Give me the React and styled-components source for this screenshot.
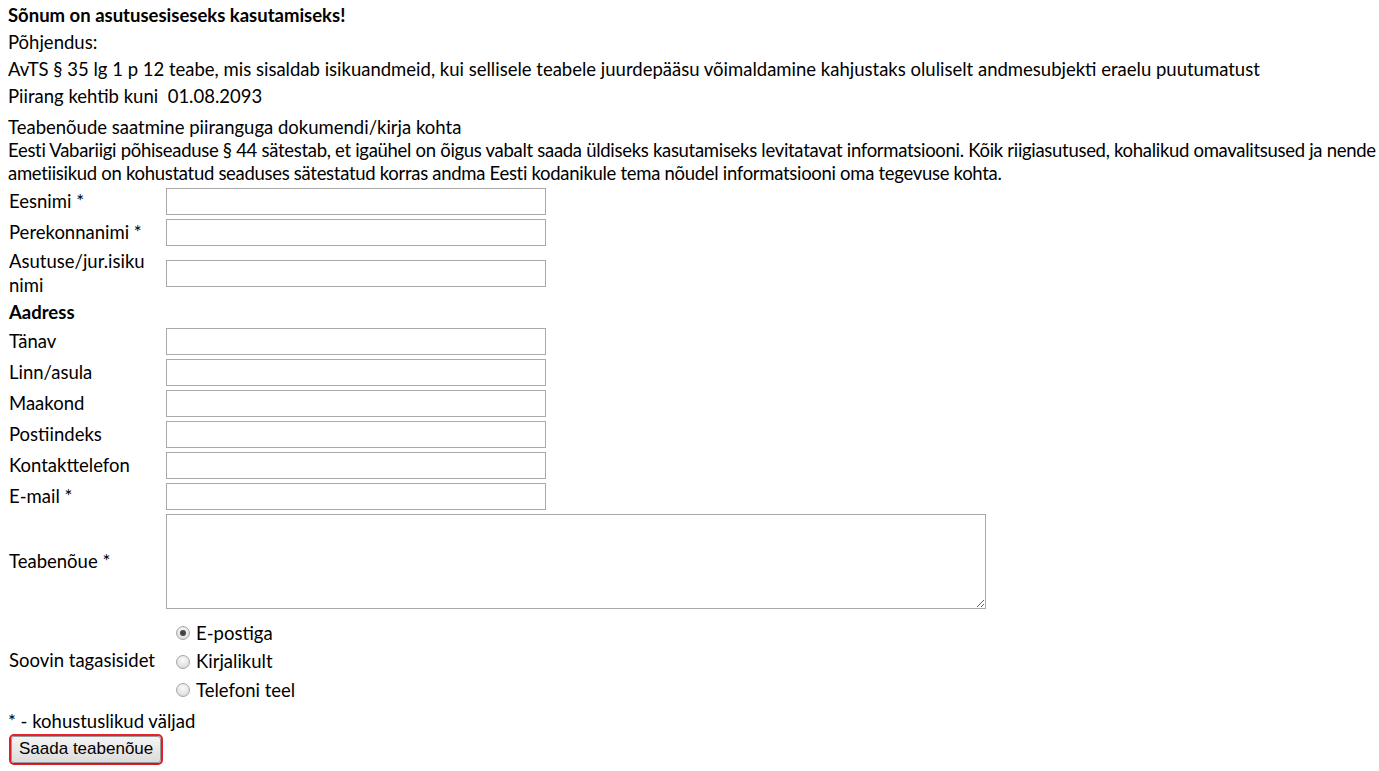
import React from "react";
import styled, { createGlobalStyle } from "styled-components";

const Global = createGlobalStyle`
  body {
    margin: 0;
    background: #fff;
    color: #000;
    font-family: Lato, "Noto Sans", sans-serif;
    font-size: 18.5px;
  }
`;

const Page = styled.div`
  padding: 2px 2px 0 8px;
`;

const Notice = styled.div`
  line-height: 27px;
`;

const NoticeLine = styled.div`
  font-weight: ${(p) => (p.bold ? 700 : 400)};
`;

const Intro = styled.div`
  margin-top: 6px;
  line-height: 23px;
`;

const IntroText = styled.div`
  letter-spacing: -0.3px;
  white-space: nowrap;
`;

const FormTable = styled.table`
  border-collapse: separate;
  border-spacing: 2px;
  margin-left: -2px;
  font-size: inherit;
  td {
    padding: 1px;
    vertical-align: middle;
    line-height: 23px;
  }
`;

const LabelCell = styled.td`
  width: 153px;
  font-weight: ${(p) => (p.bold ? 700 : 400)};
  line-height: ${(p) => (p.tall ? "23.5px" : "23px")} !important;
`;

const TextInput = styled.input`
  box-sizing: border-box;
  width: 380px;
  height: 27px;
  margin: 0;
  border: 1px solid #a9a9a9;
  display: block;
  font: inherit;
`;

const TextArea = styled.textarea`
  box-sizing: border-box;
  width: 820px;
  height: 95px;
  margin: 0;
  border: 1px solid #a9a9a9;
  display: block;
  font: inherit;
`;

const RadioGroup = styled.div`
  padding: 6px 0 3px;
`;

const RadioLine = styled.label`
  display: flex;
  align-items: center;
  height: 28.5px;
`;

const Radio = styled.input`
  appearance: none;
  width: 14px;
  height: 14px;
  margin: 0 6px 0 10px;
  border-radius: 50%;
  border: 1px solid #a6a6a6;
  box-sizing: border-box;
  background: radial-gradient(circle at 50% 35%, #fafafa 0%, #e4e4e4 60%, #cfcfcf 100%);
  position: relative;
  &:checked::after {
    content: "";
    position: absolute;
    left: 3px;
    top: 3px;
    width: 6px;
    height: 6px;
    border-radius: 50%;
    background: #444;
  }
`;

const Required = styled.div`
  line-height: 23px;
  margin-top: -1px;
`;

const SubmitRing = styled.div`
  display: inline-block;
  margin: 1px 0 0 1px;
  border: 2px solid #e8212b;
  border-radius: 5px;
`;

const SubmitButton = styled.button`
  display: block;
  font-family: "Liberation Sans", Arial, sans-serif;
  font-size: 17px;
  color: #000;
  height: 27px;
  padding: 0 7px;
  border: 1px solid #9a9a9a;
  border-radius: 3px;
  background: linear-gradient(#f4f4f4, #dcdcdc);
  box-shadow: 0 1px 2px rgba(0, 0, 0, 0.25);
`;

const fields = [
  { label: "Eesnimi *" },
  { label: "Perekonnanimi *" },
  { label: "Asutuse/jur.isiku nimi", tall: true },
];

const address = ["Tänav", "Linn/asula", "Maakond", "Postiindeks", "Kontakttelefon", "E-mail *"];

const App = () => {
  return (
    <Page>
      <Global />
      <Notice>
        <NoticeLine bold>Sõnum on asutusesiseseks kasutamiseks!</NoticeLine>
        <NoticeLine>Põhjendus:</NoticeLine>
        <NoticeLine>
          AvTS § 35 lg 1 p 12 teabe, mis sisaldab isikuandmeid, kui sellisele teabele juurdepääsu
          võimaldamine kahjustaks oluliselt andmesubjekti eraelu puutumatust
        </NoticeLine>
        <NoticeLine>Piirang kehtib kuni&nbsp; 01.08.2093</NoticeLine>
      </Notice>
      <Intro>
        <div>Teabenõude saatmine piiranguga dokumendi/kirja kohta</div>
        <IntroText>
          Eesti Vabariigi põhiseaduse § 44 sätestab, et igaühel on õigus vabalt saada üldiseks
          kasutamiseks levitatavat informatsiooni. Kõik riigiasutused, kohalikud omavalitsused ja
          nende
          <br />
          ametiisikud on kohustatud seaduses sätestatud korras andma Eesti kodanikule tema nõudel
          informatsiooni oma tegevuse kohta.
        </IntroText>
      </Intro>
      <FormTable>
        <tbody>
          {fields.map((f) => (
            <tr key={f.label}>
              <LabelCell tall={f.tall}>{f.label}</LabelCell>
              <td>
                <TextInput type="text" />
              </td>
            </tr>
          ))}
          <tr>
            <LabelCell bold>Aadress</LabelCell>
            <td />
          </tr>
          {address.map((a) => (
            <tr key={a}>
              <LabelCell>{a}</LabelCell>
              <td>
                <TextInput type="text" />
              </td>
            </tr>
          ))}
          <tr>
            <LabelCell>Teabenõue *</LabelCell>
            <td>
              <TextArea />
            </td>
          </tr>
          <tr>
            <LabelCell>Soovin tagasisidet</LabelCell>
            <td>
              <RadioGroup>
                <RadioLine>
                  <Radio type="radio" name="tagasiside" defaultChecked />
                  E-postiga
                </RadioLine>
                <RadioLine>
                  <Radio type="radio" name="tagasiside" />
                  Kirjalikult
                </RadioLine>
                <RadioLine>
                  <Radio type="radio" name="tagasiside" />
                  Telefoni teel
                </RadioLine>
              </RadioGroup>
            </td>
          </tr>
        </tbody>
      </FormTable>
      <Required>* - kohustuslikud väljad</Required>
      <SubmitRing>
        <SubmitButton type="button">Saada teabenõue</SubmitButton>
      </SubmitRing>
    </Page>
  );
};

export default App;
